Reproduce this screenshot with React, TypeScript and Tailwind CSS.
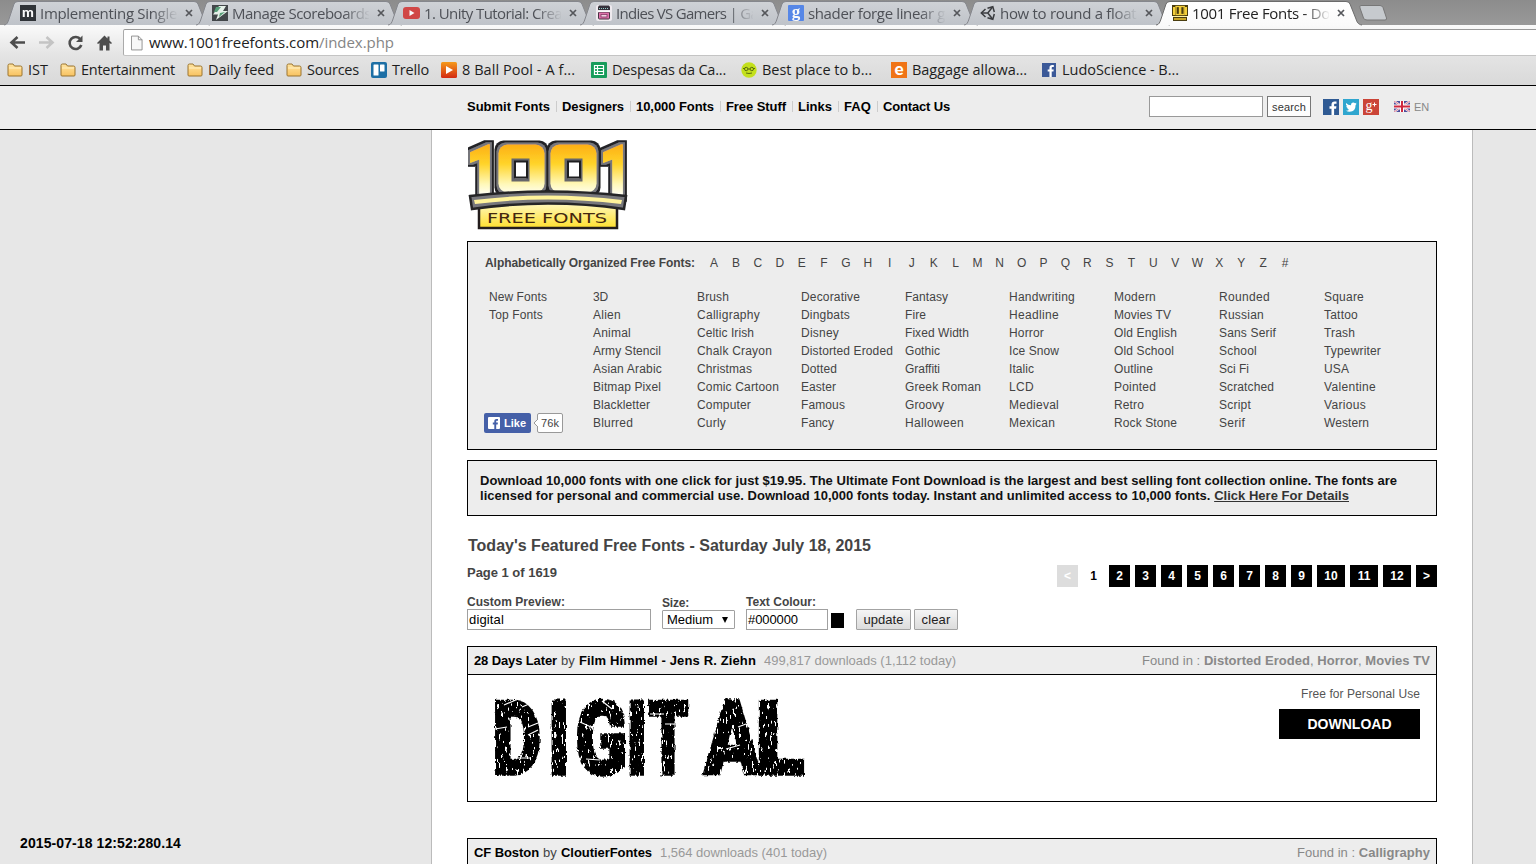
import React, { useLayoutEffect, useRef, useState } from "react";

/** One line of text whose tracking is computed so that it fills a given width. */
function Fit({ w, className = "", children }: { w: number; className?: string; children: React.ReactNode }) {
  const ref = useRef<HTMLSpanElement>(null);
  const [spacing, setSpacing] = useState(0);
  useLayoutEffect(() => {
    const el = ref.current;
    if (!el) return;
    const natural = el.getBoundingClientRect().width;
    setSpacing((w - natural) / (el.textContent || " ").length);
  }, [w]);
  return (
    <span ref={ref} className={`inline-block shrink-0 whitespace-pre ${className}`} style={{ letterSpacing: `${spacing}px` }}>
      {children}
    </span>
  );
}

function FontsIcon() {
  return (
    <svg width="16" height="16" viewBox="0 0 16 16" className="shrink-0">
      <path d="M0 0h16v11h-1v5H1v-5H0z" fill="#4a3d10" />
      <path d="M1 2h2v8H1zM13 2h2v8h-2z" fill="#f4cf3a" />
      <rect x="4" y="1.5" width="3.5" height="8" fill="none" stroke="#f4cf3a" strokeWidth="1.3" />
      <rect x="8.7" y="1.5" width="3.5" height="8" fill="none" stroke="#f4cf3a" strokeWidth="1.3" />
      <path d="M1 11h14v1H1z" fill="#fff3a0" />
      <path d="M2 13h12v2H2z" fill="#c9a526" />
    </svg>
  );
}

const tabIcons = [
  <svg key="m" width="16" height="16" viewBox="0 0 16 16"><rect width="16" height="16" fill="#202428" /><text x="8" y="12.3" textAnchor="middle" fontFamily="Lato" fontWeight="900" fontSize="14" fill="#fff">m</text></svg>,
  <svg key="s" width="16" height="16" viewBox="0 0 16 16"><rect width="16" height="16" fill="#35393c" /><path d="M7 1h7L11 6h5L4 15 6 9.500H1z" fill="#e9f5ec" /><path d="M4 2h5L5 7H2zM8 8l5-1-6 5z" fill="#4c9a70" /></svg>,
  <svg key="y" width="17" height="12" viewBox="0 0 17 12"><rect width="17" height="12" rx="3" fill="#d23a38" /><path d="M6.500 3v6l5-3z" fill="#fff" /></svg>,
  <svg key="g" width="16" height="16" viewBox="0 0 16 16"><rect width="16" height="16" rx="2" fill="#f3eef2" /><path d="M2 2l1-1.500h10l1 1.500v3H2z" fill="#25202a" /><path d="M3 3.500h10" stroke="#8fd0c8" strokeDasharray="1 1" /><rect x="2.500" y="7" width="11" height="7" rx="1" fill="#e368a8" stroke="#3b2333" /><path d="M2 6.500h12" stroke="#fff" /><rect x="5" y="9.500" width="6" height="2.500" fill="#f8d4e6" stroke="#7b2a58" strokeWidth=".8" /></svg>,
  <svg key="8" width="16" height="16" viewBox="0 0 16 16"><rect width="16" height="16" rx="1" fill="#4a80ea" /><text x="8" y="11.500" textAnchor="middle" fontFamily="Liberation Serif" fontWeight="700" fontSize="17" fill="#fff">g</text></svg>,
  <svg key="u" width="16" height="16" viewBox="0 0 16 16" fill="none" stroke="#2b2d30" strokeWidth="1.500" strokeLinejoin="miter"><path d="M7.500 3.200L12.800 1.700 14.300 7M14.300 9L12.800 14.300 7.500 12.800M5.500 4L1.300 8l4.200 4" /><path d="M7.800 8H1.500M7.800 8L12.500 2M7.800 8L12.500 14" /></svg>,
  <FontsIcon key="f" />,
];

const tabs: [string, number][] = [
  ["Implementing Single", 137],
  ["Manage Scoreboards", 139],
  ["1. Unity Tutorial: Crea", 138],
  ["Indies VS Gamers | Ga", 142],
  ["shader forge linear g", 137],
  ["how to round a float ", 140],
  ["1001 Free Fonts - Do", 138],
];

function Tab({ index }: { index: number }) {
  const active = index === 6;
  const [title, w] = tabs[index];
  return (
    <div className={`relative flex h-[25px] w-[192px] shrink-0 items-center ${active ? "z-10" : ""}`}>
      <svg className="absolute left-0 top-0 overflow-visible" width="206" height="25" viewBox="0 0 206 25">
        <path
          d="M0 25C3 25 4 22 5 19L10 4Q11 1.500 14 1.500H190Q193 1.500 194 4L200 19C201 22 202 24.500 206 25"
          fill={active ? "url(#tabOn)" : "url(#tabOff)"}
          stroke={active ? "#6b6b6b" : "#85878d"}
        />
      </svg>
      <div className="relative flex w-full items-center pl-[15px]">
        <span className={`flex w-[17px] shrink-0 justify-center ${active ? "" : "opacity-90"}`}>{tabIcons[index]}</span>
        <div className="ml-[4px] flex h-[20px] w-[137px] overflow-hidden [mask-image:linear-gradient(to_right,#000_112px,transparent_138px)]">
          <Fit w={w} className={`text-[15px] leading-[20px] ${active ? "text-[#222]" : "text-[#4e5157]"}`}>{title}</Fit>
        </div>
        <svg className="ml-[8px] shrink-0" width="8" height="8" viewBox="0 0 8 8"><path d="M1 1l6 6M7 1L1 7" stroke="#55575b" strokeWidth="1.700" /></svg>
      </div>
    </div>
  );
}

function Folder() {
  return (
    <svg width="16" height="14" viewBox="0 0 16 14">
      <path d="M1 12V2.500Q1 1 2.500 1H6l1.500 2h6Q15 3 15 4.500V12Q15 13 14 13H2Q1 13 1 12z" fill="url(#folder)" stroke="#9b7530" />
      <path d="M2 5h12" stroke="#fff0c2" />
    </svg>
  );
}

const FacebookIcon = ({ fill = "#3b5998", size = 16 }: { fill?: string; size?: number }) => (
  <svg width={size} height={size} viewBox="0 0 16 16"><rect width="16" height="16" fill={fill} /><path d="M8.500 16V9.800H6.500V7.300h2V5.600C8.500 3.500 9.700 2.400 11.600 2.400H13.500v2.300h-1.300c-.9 0-1.100.4-1.100 1.100v1.500h2.300l-.3 2.500h-2V16z" fill="#fff" /></svg>
);

const bookmarks: { icon: React.ReactNode; label: string; w: number; box: string }[] = [
  { icon: <Folder />, label: "IST", w: 20, box: "w-[53px]" },
  { icon: <Folder />, label: "Entertainment", w: 94, box: "w-[127px]" },
  { icon: <Folder />, label: "Daily feed", w: 66, box: "w-[99px]" },
  { icon: <Folder />, label: "Sources", w: 52, box: "w-[85px]" },
  { icon: <svg width="16" height="16" viewBox="0 0 16 16"><rect width="16" height="16" rx="2" fill="#1d6fa5" /><rect x="2.500" y="2.500" width="5" height="11" rx=".5" fill="#fff" /><rect x="9" y="2.500" width="4.500" height="7" rx=".5" fill="#fff" /></svg>, label: "Trello", w: 37, box: "w-[70px]" },
  { icon: <svg width="16" height="16" viewBox="0 0 16 16"><rect width="16" height="16" rx="1.500" fill="url(#ball)" /><path d="M5 4v8l7-4z" fill="#fff" /></svg>, label: "8 Ball Pool - A f...", w: 113, box: "w-[150px]" },
  { icon: <svg width="16" height="16" viewBox="0 0 16 16"><rect width="16" height="16" rx="1" fill="#179c5b" /><path d="M3.500 3.500h9v9h-9zM3.500 6.500h9M3.500 9.500h9M6.500 3.500v9" fill="none" stroke="#fff" strokeWidth="1.200" /></svg>, label: "Despesas da Ca...", w: 114, box: "w-[150px]" },
  { icon: <svg width="16" height="16" viewBox="0 0 16 16"><circle cx="8" cy="8" r="7.700" fill="#c3e01c" /><g fill="none" stroke="#40520c" strokeWidth=".8"><circle cx="5.200" cy="7" r="1.700" /><circle cx="10.800" cy="7" r="1.700" /><path d="M7 7h2M5 11q3 1 6 0M2 6.500l1.500 0M14 6.500h-1.500" /></g></svg>, label: "Best place to b...", w: 110, box: "w-[150px]" },
  { icon: <svg width="16" height="16" viewBox="0 0 16 16"><rect width="16" height="16" fill="#f07416" /><text x="8" y="12.500" textAnchor="middle" fontFamily="Lato" fontWeight="900" fontSize="17" fill="#fff">e</text></svg>, label: "Baggage allowa...", w: 115, box: "w-[150px]" },
  { icon: <FacebookIcon size={14} />, label: "LudoScience - B...", w: 117, box: "w-[150px]" },
];

function Browser() {
  return (
    <header className="h-[85px] font-['Open_Sans',sans-serif]">
      <div className="flex h-[25px] bg-gradient-to-b from-[#8c8c8c] to-[#999] pl-[4px]">
        {tabs.map((t, i) => <Tab key={t[0]} index={i} />)}
        <svg className="ml-[6px] mt-[5px]" width="36" height="16" viewBox="0 0 36 16"><path d="M7 .5H26Q28 .5 29 2.500L32.500 13Q33 15 31 15H13Q10 15 9.500 13L6 3Q5 .5 7 .5z" fill="#c6cace" stroke="#777" /></svg>
      </div>
      <div className="h-[60px] bg-gradient-to-b from-[#fafafa] via-[#e4e4e4] to-[#d9d9d9]">
        <div className="flex h-[31px] items-end">
          <div className="flex h-[26px] w-[123px] shrink-0 items-center pl-[9px]">
            <svg width="106" height="18" viewBox="0 0 106 18" fill="none">
              <path d="M16 8.500H3M8.500 3L2.500 8.500l6 5.500" stroke="#4d4d4d" strokeWidth="2.600" />
              <path d="M30 8.500h13M37.500 3l6 5.500-6 5.500" stroke="#c4c4c4" strokeWidth="2.600" />
              <path d="M71.500 5.500A6 6 0 1 0 72.300 11" stroke="#4d4d4d" strokeWidth="2.600" />
              <path d="M73.500 1.500v6.500h-6.500z" fill="#4d4d4d" />
              <path d="M95.500 1.500L88 9l1 1 1.500-1v7.500h3.500v-5h3v5h3.500V9l1.500 1 1-1-2.500-2.500V2.500h-2v2z" fill="#4d4d4d" />
            </svg>
          </div>
          <div className="flex h-[27px] flex-1 items-center rounded-l-[2px] border-y border-l border-b-[#c4c4c4] border-l-[#aaa] border-t-[#999] bg-white pl-[7px] text-[15px]">
            <svg width="12" height="16" viewBox="0 0 13 16"><path d="M.5.5H8L12 4.500V15.500H.5zM8 .5V4.500H12" fill="#f8f8f8" stroke="#8c8c8c" /></svg>
            <Fit w={245} className="ml-[6px]"><span className="text-[#222]">www.1001freefonts.com</span><span className="text-[#858585]">/index.php</span></Fit>
          </div>
        </div>
        <div className="flex h-[28px] items-center pl-[7px] text-[14.500px] text-[#1d1d1d]">
          {bookmarks.map((b) => (
            <div key={b.label} className={`flex shrink-0 items-center gap-[5px] ${b.box}`}>
              <span className="flex w-[16px] shrink-0 justify-center">{b.icon}</span>
              <Fit w={b.w}>{b.label}</Fit>
            </div>
          ))}
        </div>
      </div>
    </header>
  );
}

const nav: [string, number][] = [["Submit Fonts", 83], ["Designers", 62], ["10,000 Fonts", 78], ["Free Stuff", 60], ["Links", 34], ["FAQ", 27], ["Contact Us", 67]];

function TopNav() {
  return (
    <div className="flex h-[45px] items-center border-y border-black bg-[#ededed] pb-[2px] pl-[467px]">
      <nav className="flex items-center text-[13px] font-bold text-black">
        {nav.map(([label, w], i) => (
          <React.Fragment key={label}>
            {i > 0 && <span className="mx-[5.500px] h-[11px] w-px bg-[#ccc]" />}
            <Fit w={w}>{label}</Fit>
          </React.Fragment>
        ))}
      </nav>
      <div className="ml-[199px] flex items-center">
        <div className="h-[21px] w-[114px] border border-[#999] bg-white" />
        <div className="ml-[4px] flex h-[21px] w-[44px] items-center justify-center border border-[#777] bg-[#fdfdfd] pt-px text-[11px] text-[#333]"><Fit w={34}>search</Fit></div>
        <div className="ml-[12px] flex gap-[4px]">
          <FacebookIcon fill="#2f5a93" />
          <svg width="16" height="16" viewBox="0 0 16 16"><rect width="16" height="16" fill="#2fa6cf" /><path d="M3 4q2 2.200 5 2.300Q8 3.500 10.300 3.500q1 0 1.700.7l1.500-.5-.8 1.200 1-.2-1.100 1.200Q12.600 12.500 6.700 12.700 4.500 12.600 3 11.700q2 0 3.200-1Q4.600 10.500 4.200 9.200h1Q3.400 8.700 3.200 7l1 .2Q2.400 5.900 3 4z" fill="#fff" /></svg>
          <svg width="16" height="16" viewBox="0 0 16 16"><rect width="16" height="16" fill="#cb4437" /><text x="2.500" y="10.500" fontFamily="Liberation Serif" fontSize="14" fill="#fff">g</text><path d="M9.500 5.500h4M11.500 3.500v4" stroke="#fff" /></svg>
        </div>
        <svg className="ml-[15px]" width="16" height="11" viewBox="0 0 16 11"><rect width="16" height="11" fill="#4b4d9a" /><path d="M0 0l16 11M16 0L0 11" stroke="#f5eef3" strokeWidth="2.200" /><path d="M0 0l16 11M16 0L0 11" stroke="#d4536b" strokeWidth=".7" /><path d="M8 0v11M0 5.500h16" stroke="#fff" strokeWidth="4" /><path d="M8 0v11M0 5.500h16" stroke="#cf2940" strokeWidth="2" /></svg>
        <Fit w={15} className="ml-[4px] mt-px text-[11px] text-[#888]">EN</Fit>
      </div>
    </div>
  );
}

function Logo() {
  return (
    <svg width="162" height="92" viewBox="0 0 162 92" className="block">
      <defs>
        <linearGradient id="gold" gradientUnits="userSpaceOnUse" x1="0" y1="4" x2="0" y2="54"><stop offset="0" stopColor="#fdae14" /><stop offset=".4" stopColor="#ffd42a" /><stop offset=".8" stopColor="#fff8b8" /><stop offset="1" stopColor="#fffef0" /></linearGradient>
        <linearGradient id="plate" x1="0" y1="0" x2="0" y2="1"><stop offset="0" stopColor="#fffbd0" /><stop offset="1" stopColor="#ffdf2e" /></linearGradient>
        <filter id="rim" filterUnits="userSpaceOnUse" x="-2" y="-4" width="166" height="80">
          <feMorphology in="SourceAlpha" operator="dilate" radius="4" result="a" />
          <feFlood floodColor="#232326" /><feComposite in2="a" operator="in" result="dark" />
          <feMorphology in="SourceAlpha" operator="dilate" radius="2" result="b" />
          <feFlood floodColor="#77777c" /><feComposite in2="b" operator="in" result="grey" />
          <feMerge><feMergeNode in="dark" /><feMergeNode in="grey" /><feMergeNode in="SourceGraphic" /></feMerge>
        </filter>
      </defs>
      <rect x="11" y="60" width="138" height="28" fill="url(#plate)" stroke="#231c1c" strokeWidth="2.500" />
      <g fill="url(#gold)" fontFamily="Roboto" fontWeight="900">
        {[-2, 131].map((x) => <text key={x} filter="url(#rim)" x={x} y="57" fontSize="73" textLength="33" lengthAdjust="spacingAndGlyphs" stroke="url(#gold)" strokeWidth="1.500">1</text>)}
        {[30.5, 82.5].map((x) => (
          <g key={x} filter="url(#rim)">
            <rect x={x} y="4.500" width="46" height="48" rx="9" />
            <text x={x + 2} y="49" fontSize="58" textLength="42" lengthAdjust="spacingAndGlyphs">0</text>
          </g>
        ))}
      </g>
      {[44, 97].map((x) => (
        <g key={x}><rect x={x + 1} y="20" width="15" height="20" fill="#fff" stroke="#66666b" strokeWidth="3" /><rect x={x + 3} y="21.500" width="12" height="16" fill="#fff" stroke="#1e1e20" strokeWidth="2" /></g>
      ))}
      <path d="M2 56Q80 47 158 56L156 69Q80 58 4 69z" fill="#77777c" stroke="#252527" strokeWidth="2.500" />
      <path d="M6 60Q80 51 154 60L153 64Q80 55 7 64z" fill="#fff39b" />
      <text x="19" y="83" fontFamily="DejaVu Sans" fontSize="14.500" textLength="120" lengthAdjust="spacingAndGlyphs" fill="#43260f">FREE FONTS</text>
    </svg>
  );
}

const categories: { w: string; items: [string, number][] }[] = [
  { w: "w-[104px]", items: [["3D", 15], ["Alien", 28], ["Animal", 38], ["Army Stencil", 68], ["Asian Arabic", 69], ["Bitmap Pixel", 68], ["Blackletter", 57], ["Blurred", 40]] },
  { w: "w-[104px]", items: [["Brush", 32], ["Calligraphy", 63], ["Celtic Irish", 57], ["Chalk Crayon", 75], ["Christmas", 55], ["Comic Cartoon", 82], ["Computer", 54], ["Curly", 29]] },
  { w: "w-[104px]", items: [["Decorative", 59], ["Dingbats", 49], ["Disney", 38], ["Distorted Eroded", 92], ["Dotted", 36], ["Easter", 35], ["Famous", 44], ["Fancy", 33]] },
  { w: "w-[104px]", items: [["Fantasy", 43], ["Fire", 21], ["Fixed Width", 64], ["Gothic", 35], ["Graffiti", 35], ["Greek Roman", 76], ["Groovy", 39], ["Halloween", 59]] },
  { w: "w-[105px]", items: [["Handwriting", 66], ["Headline", 50], ["Horror", 35], ["Ice Snow", 50], ["Italic", 25], ["LCD", 25], ["Medieval", 50], ["Mexican", 46]] },
  { w: "w-[105px]", items: [["Modern", 42], ["Movies TV", 57], ["Old English", 63], ["Old School", 60], ["Outline", 39], ["Pointed", 42], ["Retro", 30], ["Rock Stone", 63]] },
  { w: "w-[105px]", items: [["Rounded", 51], ["Russian", 45], ["Sans Serif", 57], ["School", 38], ["Sci Fi", 30], ["Scratched", 55], ["Script", 32], ["Serif", 26]] },
  { w: "w-[105px]", items: [["Square", 40], ["Tattoo", 34], ["Trash", 31], ["Typewriter", 57], ["USA", 25], ["Valentine", 52], ["Various", 42], ["Western", 45]] },
];

function Directory() {
  return (
    <section className="mt-[9px] h-[209px] border border-black bg-[#ededed] text-[12px] text-[#444]">
      <div className="mt-[12px] flex h-[18px] items-center pl-[17px]">
        <Fit w={210} className="font-bold">Alphabetically Organized Free Fonts:</Fit>
        <div className="ml-[8px] flex">
          {"ABCDEFGHIJKLMNOPQRSTUVWXYZ#".split("").map((c) => <span key={c} className="w-[21.980px] text-center">{c}</span>)}
        </div>
      </div>
      <div className="mt-[16px] flex pl-[16px] leading-[18px]">
        <div className="flex w-[109px] flex-col justify-between">
          <div className="flex flex-col items-start pl-[5px]"><Fit w={58}>New Fonts</Fit><Fit w={54}>Top Fonts</Fit></div>
          <div className="-mb-px flex items-center">
            <div className="flex h-[20px] w-[47px] items-center rounded-[2px] bg-[#4560a8] pl-[4px] text-[11px] font-bold text-white">
              <svg width="12" height="12" viewBox="0 0 12 12"><rect width="12" height="12" rx="1" fill="#fff" /><path d="M6.300 12V7.500H4.800V5.600h1.500V4.300C6.300 2.800 7.200 2 8.500 2H10v1.700H9c-.7 0-.8.3-.8.8v1.100h1.700l-.2 1.900H8.200V12z" fill="#4560a8" /></svg>
              <Fit w={22} className="ml-[4px]">Like</Fit>
            </div>
            <svg className="z-10 -mr-px ml-[2px]" width="5" height="8" viewBox="0 0 5 8"><path d="M5 0L1 4l4 4" fill="#fff" stroke="#999" /></svg>
            <div className="flex h-[20px] w-[26px] items-center justify-center rounded-[2px] border border-[#999] bg-white text-[11px]"><Fit w={18}>76k</Fit></div>
          </div>
        </div>
        {categories.map((c) => (
          <div key={c.items[0][0]} className={`flex shrink-0 flex-col items-start ${c.w}`}>
            {c.items.map(([label, w]) => <Fit key={label} w={w}>{label}</Fit>)}
          </div>
        ))}
      </div>
    </section>
  );
}

const pages = ["<", "1", "2", "3", "4", "5", "6", "7", "8", "9", "10", "11", "12", ">"];
const pageTone = (p: string) => (p === "<" ? "bg-[#ddd] text-white" : p === "1" ? "bg-white text-black" : "bg-black text-white");

function Controls() {
  return (
    <div className="mt-[9px] flex h-[34px] items-end text-[12px] text-[#444]">
      <div className="flex w-[195px] flex-col items-start">
        <Fit w={98} className="font-bold leading-[14px]">Custom Preview:</Fit>
        <div className="flex h-[21px] w-[184px] items-center border border-[#a0a0a0] bg-white pl-[1px] text-[13px] text-black"><Fit w={35}>digital</Fit></div>
      </div>
      <div className="flex w-[84px] flex-col items-start">
        <Fit w={27} className="font-bold leading-[14px]">Size:</Fit>
        <div className="mb-px flex h-[19px] w-[73px] items-center justify-between rounded-[1px] border border-[#a0a0a0] bg-white pl-[4px] pr-[6px] text-[13px] text-black">
          <Fit w={46}>Medium</Fit>
          <svg width="6" height="6" viewBox="0 0 6 6"><path d="M0 0h6L3 6z" fill="#000" /></svg>
        </div>
      </div>
      <div className="flex w-[85px] flex-col items-start">
        <Fit w={70} className="font-bold leading-[14px]">Text Colour:</Fit>
        <div className="flex h-[21px] w-[82px] items-center border border-[#a0a0a0] bg-white pl-[1px] text-[13px] text-black"><Fit w={50}>#000000</Fit></div>
      </div>
      <div className="mb-[2px] h-[15px] w-[13px] bg-black" />
      <div className="ml-[12px] flex gap-[3px] text-[13px] text-[#222]">
        <div className="flex h-[21px] w-[55px] items-center justify-center rounded-[1px] border border-[#a3a3a3] bg-gradient-to-b from-[#f5f5f5] to-[#dcdcdc]"><Fit w={40}>update</Fit></div>
        <div className="flex h-[21px] w-[44px] items-center justify-center rounded-[1px] border border-[#a3a3a3] bg-gradient-to-b from-[#f5f5f5] to-[#dcdcdc]"><Fit w={29}>clear</Fit></div>
      </div>
    </div>
  );
}

/* Ink boxes of the letters in the distressed sample. */
const sample = [
  { ch: "D", x: 28, w: 43, adv: 0.05, ink: 0.57 },
  { ch: "I", x: 84, w: 14, adv: 0.055, ink: 0.2 },
  { ch: "G", x: 110, w: 45, adv: 0.035, ink: 0.59 },
  { ch: "I", x: 162, w: 14, adv: 0.055, ink: 0.2 },
  { ch: "T", x: 181, w: 39, adv: 0.015, ink: 0.61 },
  { ch: "A", x: 237, w: 55, adv: 0.005, ink: 0.68 },
  { ch: "L", x: 292, w: 44, adv: 0.05, ink: 0.49 },
];

function Sample() {
  return (
    <svg width="360" height="110" viewBox="0 0 360 110" className="block">
      <defs>
        <filter id="worn" x="0" y="0" width="360" height="110" filterUnits="userSpaceOnUse">
          <feTurbulence type="fractalNoise" baseFrequency="0.45 0.14" numOctaves="3" seed="7" result="n" />
          <feDisplacementMap in="SourceGraphic" in2="n" scale="4" xChannelSelector="R" yChannelSelector="G" result="d" />
          <feColorMatrix in="n" values="0 0 0 0 0  0 0 0 0 0  0 0 0 0 0  22 0 0 0 -14.300" result="holes" />
          <feComposite in="d" in2="holes" operator="out" />
        </filter>
      </defs>
      <g filter="url(#worn)" fontFamily="Roboto" fontWeight="900" fontSize="102" stroke="#000" strokeWidth="3.500">
        {sample.map((l) => {
          const s = l.w / (l.ink * 102);
          return <text key={l.x} transform={`translate(${l.x - l.adv * 102 * s} 98.500) scale(${s} 1)`}>{l.ch}</text>;
        })}
      </g>
      <path d="M36 30l14-6M54 32l14-6M27 54l12-2M60 52l10-4M60 60l10-5M46 83h16M112 47l11 5M134 26l10 8M118 84l14 1M182 39h14M197 49h13M258 74l14-4M270 52l8-3" stroke="#fff" strokeWidth="1.200" fill="none" />
    </svg>
  );
}

function CardHeader({ name, nw, author, aw, stats, sw, found }: { name: string; nw: number; author: string; aw: number; stats: string; sw: number; found: React.ReactNode }) {
  return (
    <div className="flex h-[28px] items-center border-b border-black bg-[#ededed] pl-[6px] pr-[6px] text-[13px]">
      <Fit w={nw} className="font-bold text-black">{name}</Fit>
      <Fit w={14} className="mx-[4px] text-[#444]">by</Fit>
      <Fit w={aw} className="font-bold text-black">{author}</Fit>
      <Fit w={sw} className="ml-[8px] text-[#999]">{stats}</Fit>
      <div className="ml-auto text-[#888]">{found}</div>
    </div>
  );
}

export default function App() {
  return (
    <div className="flex h-[864px] w-[1536px] flex-col overflow-hidden bg-[#e7e7e7] font-['Liberation_Sans',Arial,sans-serif]">
      <svg width="0" height="0" className="absolute">
        <defs>
          <linearGradient id="tabOff" x1="0" y1="0" x2="0" y2="1"><stop offset="0" stopColor="#cfd2d6" /><stop offset="1" stopColor="#bfc3c9" /></linearGradient>
          <linearGradient id="tabOn" x1="0" y1="0" x2="0" y2="1"><stop offset="0" stopColor="#fff" /><stop offset="1" stopColor="#fafafa" /></linearGradient>
          <linearGradient id="folder" x1="0" y1="0" x2="0" y2="1"><stop offset="0" stopColor="#ffe4a0" /><stop offset="1" stopColor="#f8c261" /></linearGradient>
          <linearGradient id="ball" x1="0" y1="0" x2="0" y2="1"><stop offset="0" stopColor="#f59a1c" /><stop offset="1" stopColor="#d32a12" /></linearGradient>
        </defs>
      </svg>
      <Browser />
      <TopNav />
      <div className="flex min-h-0 flex-1">
        <aside className="flex w-[431px] items-end pb-[13px] pl-[20px]">
          <Fit w={161} className="text-[14px] font-bold leading-[16px] text-black">2015-07-18 12:52:280.14</Fit>
        </aside>
        <main className="w-[1042px] overflow-hidden border-x border-[#bbb] bg-white px-[35px] pt-[10px]">
          <div className="h-[92px] pl-px"><Logo /></div>
          <Directory />
          <section className="mt-[10px] flex h-[56px] flex-col items-start justify-center border border-black bg-[#ededed] pl-[12px] text-[13px] font-bold leading-[15px] text-[#111]">
            <Fit w={917}>Download 10,000 fonts with one click for just $19.95. The Ultimate Font Download is the largest and best selling font collection online. The fonts are</Fit>
            <Fit w={869}>licensed for personal and commercial use. Download 10,000 fonts today. Instant and unlimited access to 10,000 fonts. <span className="text-[#333] underline">Click Here For Details</span></Fit>
          </section>
          <h1 className="mt-[20px] flex h-[20px] pl-px text-[16px] font-bold leading-[20px] text-[#444]"><Fit w={403}>Today's Featured Free Fonts - Saturday July 18, 2015</Fit></h1>
          <div className="mt-[9px] flex h-[22px] items-start justify-between">
            <Fit w={90} className="text-[13px] font-bold leading-[16px] text-[#444]">Page 1 of 1619</Fit>
            <div className="flex gap-[5px] text-[12px] font-bold">
              {pages.map((p) => (
                <span key={p} className={`flex h-[22px] items-center justify-center ${p.length > 1 ? "w-[28px]" : "w-[21px]"} ${pageTone(p)}`}>{p}</span>
              ))}
            </div>
          </div>
          <Controls />
          <article className="mt-[16px] h-[156px] border border-black bg-white">
            <CardHeader
              name="28 Days Later" nw={83} author="Film Himmel - Jens R. Ziehn" aw={177} stats="499,817 downloads (1,112 today)" sw={192}
              found={<Fit w={288}>Found in : <b>Distorted Eroded</b>, <b>Horror</b>, <b>Movies TV</b></Fit>}
            />
            <div className="flex justify-between pr-[16px]">
              <Sample />
              <div className="flex flex-col items-end pt-[11px]">
                <Fit w={119} className="text-[12px] leading-[16px] text-[#555]">Free for Personal Use</Fit>
                <div className="mt-[7px] flex h-[30px] w-[141px] items-center justify-center bg-black text-[14px] font-bold text-white"><Fit w={84}>DOWNLOAD</Fit></div>
              </div>
            </div>
          </article>
          <article className="mt-[36px] h-[156px] border border-black bg-white">
            <CardHeader
              name="CF Boston" nw={65} author="CloutierFontes" aw={91} stats="1,564 downloads (401 today)" sw={167}
              found={<Fit w={133}>Found in : <b>Calligraphy</b></Fit>}
            />
          </article>
        </main>
      </div>
    </div>
  );
}
